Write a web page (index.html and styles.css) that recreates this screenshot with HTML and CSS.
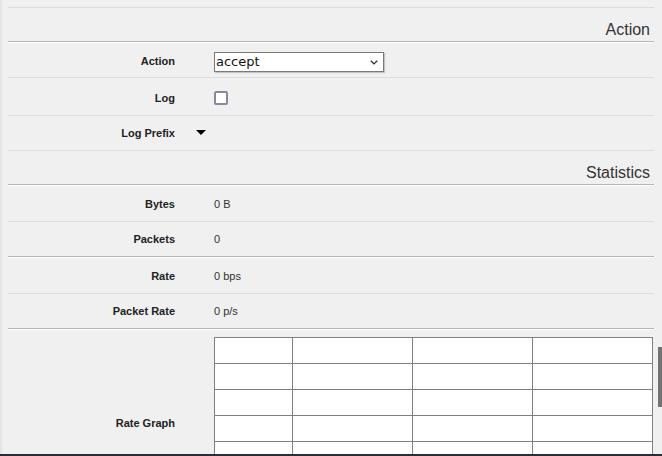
FILE: index.html
```html
<!DOCTYPE html>
<html>
<head>
<meta charset="utf-8">
<title>Rule</title>
<link rel="stylesheet" href="styles.css">
</head>
<body>
<div class="page">
  <div class="top-sep"></div>

  <div class="section-head">Action</div>
  <div class="row h34">
    <div class="label shift">Action</div>
    <div class="gutter"></div>
    <div class="value">
      <div class="select-wrap">
        <select class="select"><option>accept</option></select>
        <svg class="chev" width="8" height="5" viewBox="0 0 8 5"><path d="M0.8 0.8 L4 3.9 L7.2 0.8" fill="none" stroke="#333" stroke-width="1.4"/></svg>
      </div>
    </div>
  </div>
  <div class="row h37">
    <div class="label shift">Log</div>
    <div class="gutter"></div>
    <div class="value"><span class="checkbox"></span></div>
  </div>
  <div class="row h34">
    <div class="label">Log Prefix</div>
    <div class="gutter"><span class="tri"></span></div>
    <div class="value"></div>
  </div>

  <div class="section-head">Statistics</div>
  <div class="row h35">
    <div class="label">Bytes</div>
    <div class="gutter"></div>
    <div class="value">0 B</div>
  </div>
  <div class="row h34 group-end">
    <div class="label">Packets</div>
    <div class="gutter"></div>
    <div class="value">0</div>
  </div>
  <div class="row h35">
    <div class="label">Rate</div>
    <div class="gutter"></div>
    <div class="value">0 bps</div>
  </div>
  <div class="row h34 group-end">
    <div class="label">Packet Rate</div>
    <div class="gutter"></div>
    <div class="value">0 p/s</div>
  </div>
  <div class="row graph-row">
    <div class="label">Rate Graph</div>
    <div class="gutter"></div>
    <div class="value graph-cell">
      <table class="graph">
        <tr><td class="c1"></td><td class="c2"></td><td class="c2"></td><td class="c2"></td></tr>
        <tr><td></td><td></td><td></td><td></td></tr>
        <tr><td></td><td></td><td></td><td></td></tr>
        <tr><td></td><td></td><td></td><td></td></tr>
        <tr><td></td><td></td><td></td><td></td></tr>
      </table>
    </div>
  </div>
</div>
<div class="scroll-thumb"></div>
<div class="footer-bar"></div>
</body>
</html>
```

FILE: styles.css
```css
html {
  overflow: hidden;
  background: #f0f0f0;
}
body {
  margin: 0;
  height: 456px;
  overflow: hidden;
  border-left: 2px solid #e4e4e4;
  box-sizing: border-box;
  font-family: "Liberation Sans", Arial, sans-serif;
  font-size: 11px;
  color: #333;
}
.page {
  margin: 0 8px 0 6px;
}
.top-sep {
  height: 7px;
  border-bottom: 1px solid #dcdcdc;
}
.section-head {
  height: 31px;
  box-sizing: content-box;
  display: flex;
  align-items: flex-end;
  justify-content: flex-end;
  padding: 0 4px 2px 0;
  font-size: 16px;
  line-height: 18px;
  color: #333;
  border-bottom: 1px solid #b5b5b5;
  box-shadow: 0 1px 0 #ffffff;
  margin-bottom: 1px;
}
.row {
  display: grid;
  grid-template-columns: 167px 39px 1fr;
  align-items: center;
  border-bottom: 1px solid #dcdcdc;
}
.h34 { height: 34px; }
.h35 { height: 35px; }
.h37 { height: 37px; }
.group-end {
  border-bottom-color: #b5b5b5;
  box-shadow: 0 1px 0 #ffffff;
  margin-bottom: 1px;
}
.label {
  text-align: right;
  font-weight: bold;
  color: #222;
}
.label.shift {
  padding-top: 2px;
}
.value {
  color: #333;
}
.gutter {
  display: flex;
  align-items: center;
}
.tri {
  display: block;
  margin-left: 21px;
  margin-top: -1px;
  width: 0;
  height: 0;
  border-left: 5px solid transparent;
  border-right: 5px solid transparent;
  border-top: 5px solid #000;
}
.select-wrap {
  position: relative;
  width: 170px;
  height: 20px;
  margin-top: 3px;
}
.select {
  appearance: none;
  -webkit-appearance: none;
  display: block;
  width: 170px;
  height: 20px;
  margin: 0;
  padding: 0 0 0 1px;
  box-sizing: border-box;
  border: 1px solid #7a7a7a;
  border-radius: 0;
  background: #fff;
  box-shadow: 1px 1px 1px rgba(0,0,0,0.18);
  font-family: "DejaVu Sans", sans-serif;
  font-size: 13px;
  line-height: 18px;
  color: #111;
}
.chev {
  position: absolute;
  left: 156px;
  top: 8px;
}
.checkbox {
  display: block;
  width: 14px;
  height: 14px;
  box-sizing: border-box;
  border: 2px solid #8c889b;
  border-radius: 2px;
  background: #fff;
  margin-top: 2px;
}
.graph-row {
  height: 186px;
  border-bottom: none;
}
.graph-cell {
  align-self: start;
  padding-top: 7px;
}
.graph {
  border-collapse: collapse;
  width: 439px;
  background: #fff;
  table-layout: fixed;
}
.graph td {
  border: 1px solid #808080;
  height: 26px;
  padding: 0;
  box-sizing: border-box;
}
.graph .c1 { width: 78px; }
.graph .c2 { width: 120px; }
.scroll-thumb {
  position: fixed;
  right: 0;
  top: 347px;
  width: 4px;
  height: 60px;
  background: #737373;
}
.footer-bar {
  position: fixed;
  left: 0;
  right: 0;
  bottom: 0;
  height: 2px;
  background: #292d35;
}
```
